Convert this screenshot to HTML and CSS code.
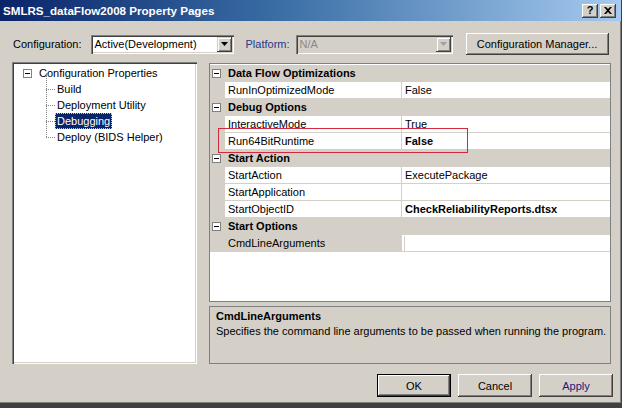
FILE: index.html
```html
<!DOCTYPE html>
<html>
<head>
<meta charset="utf-8">
<title>Property Pages</title>
<link rel="stylesheet" href="styles.css">
</head>
<body>
<div class="window">
  <div class="titlebar">
    <span class="title">SMLRS_dataFlow2008 Property Pages</span>
    <div class="caption-btns">
      <span class="cap cap-help">?</span>
      <span class="cap cap-close"><svg width="8" height="7" viewBox="0 0 8 7"><path d="M0 0h2l2 2 2-2h2L5 3.5 8 7H6L4 5 2 7H0l3-3.5z" fill="#000"/></svg></span>
    </div>
  </div>

  <div class="config-row">
    <span class="lbl">Configuration:</span>
    <div class="combo combo-config">
      <span class="combo-text">Active(Development)</span>
      <span class="drop"><svg width="7" height="4" viewBox="0 0 7 4"><path d="M0 0h7L3.5 4z" fill="#000"/></svg></span>
    </div>
    <span class="lbl lbl-platform">Platform:</span>
    <div class="combo combo-platform">
      <span class="combo-text">N/A</span>
      <span class="drop"><svg width="7" height="4" viewBox="0 0 7 4"><path d="M0 0h7L3.5 4z" fill="#a0a0a0"/></svg></span>
    </div>
    <span class="btn btn-cm">Configuration Manager...</span>
  </div>

  <div class="main">
    <div class="tree">
      <div class="tree-root">
        <span class="minus-box"><span></span></span>
        <span class="tree-label">Configuration Properties</span>
      </div>
      <ul class="tree-children">
        <li><span class="tree-label">Build</span></li>
        <li><span class="tree-label">Deployment Utility</span></li>
        <li><span class="tree-label selected">Debugging</span></li>
        <li class="last"><span class="tree-label">Deploy (BIDS Helper)</span></li>
      </ul>
    </div>

    <div class="right">
      <div class="grid">
        <div class="cat"><span class="minus-box"><span></span></span><span class="cat-name">Data Flow Optimizations</span></div>
        <div class="prop"><span class="gutter"></span><span class="pname">RunInOptimizedMode</span><span class="pval">False</span></div>
        <div class="cat"><span class="minus-box"><span></span></span><span class="cat-name">Debug Options</span></div>
        <div class="prop"><span class="gutter"></span><span class="pname">InteractiveMode</span><span class="pval">True</span></div>
        <div class="prop"><span class="gutter"></span><span class="pname">Run64BitRuntime</span><span class="pval bold">False</span></div>
        <div class="cat"><span class="minus-box"><span></span></span><span class="cat-name">Start Action</span></div>
        <div class="prop"><span class="gutter"></span><span class="pname">StartAction</span><span class="pval">ExecutePackage</span></div>
        <div class="prop"><span class="gutter"></span><span class="pname">StartApplication</span><span class="pval"></span></div>
        <div class="prop"><span class="gutter"></span><span class="pname">StartObjectID</span><span class="pval bold">CheckReliabilityReports.dtsx</span></div>
        <div class="cat"><span class="minus-box"><span></span></span><span class="cat-name">Start Options</span></div>
        <div class="prop prop-selected"><span class="gutter"></span><span class="pname">CmdLineArguments</span><span class="pval pval-edit"><span class="edit"></span></span></div>
        <div class="highlight-box"></div>
      </div>
      <div class="desc">
        <div class="desc-title">CmdLineArguments</div>
        <div class="desc-text">Specifies the command line arguments to be passed when running the program.</div>
      </div>
    </div>
  </div>

  <div class="buttons">
    <span class="btn btn-dlg btn-default">OK</span>
    <span class="btn btn-dlg">Cancel</span>
    <span class="btn btn-dlg btn-apply">Apply</span>
  </div>
</div>
</body>
</html>
```

FILE: styles.css
```css
* { box-sizing: border-box; }
html, body { margin: 0; padding: 0; }
body {
  width: 622px;
  height: 408px;
  background: #404040;
  font-family: "Liberation Sans", Arial, sans-serif;
  font-size: 11px;
  color: #000;
  overflow: hidden;
}
.window {
  width: 622px;
  height: 404px;
  background: #d4d0c8;
  border-right: 1px solid #404040;
  border-bottom: 1px solid #404040;
  box-shadow: inset -1px -1px 0 #808080;
  position: relative;
}
.titlebar {
  height: 21px;
  background: linear-gradient(to right, #0a246a 0%, #3a6ea5 45%, #a6caf0 100%);
  display: flex;
  align-items: center;
  justify-content: space-between;
  padding: 0 3px 0 3px;
}
.title {
  color: #fff;
  font-weight: bold;
  font-size: 11.6px;
  white-space: nowrap;
}
.caption-btns { display: flex; gap: 2px; margin-right: 2px; }
.cap {
  width: 16px;
  height: 14px;
  background: #d4d0c8;
  box-shadow: inset -1px -1px 0 #404040, inset 1px 1px 0 #fff, inset -2px -2px 0 #808080;
  display: flex;
  align-items: center;
  justify-content: center;
  font-weight: bold;
  font-size: 11px;
  line-height: 1;
}

.config-row {
  display: flex;
  align-items: center;
  height: 22px;
  margin-top: 12px;
  padding-left: 13px;
}
.lbl { white-space: nowrap; }
.combo {
  height: 19px;
  display: flex;
  align-items: center;
  background: #fff;
  box-shadow: inset 1px 1px 0 #808080, inset 2px 2px 0 #404040, inset -1px -1px 0 #fff, inset -2px -2px 0 #d4d0c8;
  padding: 2px 2px 2px 4px;
}
.combo-text { flex: 1; white-space: nowrap; }
.drop {
  width: 15px;
  height: 15px;
  background: #d4d0c8;
  box-shadow: inset -1px -1px 0 #404040, inset 1px 1px 0 #d4d0c8, inset 2px 2px 0 #fff, inset -2px -2px 0 #808080;
  display: flex;
  align-items: center;
  justify-content: center;
}
.combo-config { width: 143px; margin-left: 9px; }
.lbl-platform { color: #28378a; margin-left: 12px; }
.combo-platform { width: 157px; margin-left: 6px; background: #d4d0c8; color: #8c8a84; }
.btn {
  display: flex;
  align-items: center;
  justify-content: center;
  background: #d4d0c8;
  box-shadow: inset -1px -1px 0 #404040, inset 1px 1px 0 #fff, inset -2px -2px 0 #808080;
  white-space: nowrap;
}
.btn-cm { width: 143px; height: 22px; margin-left: 13px; }

.main {
  display: flex;
  margin-top: 7px;
  padding-left: 12px;
  height: 302px;
}
.tree {
  width: 185px;
  height: 302px;
  background: #fff;
  box-shadow: inset 1px 1px 0 #808080, inset 2px 2px 0 #404040, inset -1px -1px 0 #fff, inset -2px -2px 0 #d4d0c8;
  padding: 3px 0 0 11px;
}
.tree-root {
  display: flex;
  align-items: center;
  height: 16px;
}
.tree .minus-box { margin-right: 5px; }
.minus-box {
  width: 9px;
  height: 9px;
  border: 1px solid #808080;
  background: #fff;
  display: flex;
  align-items: center;
  justify-content: center;
  flex: none;
}
.minus-box span { width: 5px; height: 1px; background: #000; }
.tree-label {
  padding: 1px 2px;
  line-height: 14px;
  white-space: nowrap;
}
.tree-children {
  list-style: none;
  margin: 0;
  padding: 0 0 0 23px;
}
.tree-children li {
  height: 16px;
  display: flex;
  align-items: center;
  position: relative;
  padding-left: 9px;
}
.tree-children li::before {
  content: "";
  position: absolute;
  left: 0;
  top: 8px;
  width: 9px;
  border-top: 1px dotted #808080;
}
.tree-children li::after {
  content: "";
  position: absolute;
  left: 0;
  top: -8px;
  height: 16px;
  border-left: 1px dotted #808080;
}
.tree-label.selected {
  background: #0a246a;
  color: #fff;
  outline: 1px dotted #c0c0ff;
  outline-offset: -1px;
}

.right {
  display: flex;
  flex-direction: column;
  margin-left: 12px;
  width: 402px;
  padding-top: 1px;
  gap: 4px;
}
.grid {
  height: 239px;
  background: #fff;
  border: 1px solid #808080;
  padding-top: 1px;
  position: relative;
}
.cat, .prop {
  display: flex;
  height: 17px;
  border-bottom: 1px solid #d4d0c8;
}
.cat {
  background: #d4d0c8;
  align-items: center;
  padding-left: 2px;
}
.cat-name {
  font-weight: bold;
  margin-left: 7px;
  white-space: nowrap;
}
.gutter {
  width: 15px;
  background: #d4d0c8;
  flex: none;
}
.pname {
  width: 177px;
  padding-left: 3px;
  line-height: 16px;
  border-right: 1px solid #d4d0c8;
  white-space: nowrap;
  flex: none;
}
.pval {
  flex: 1;
  padding-left: 3px;
  line-height: 16px;
  white-space: nowrap;
}
.bold { font-weight: bold; }
.prop-selected .pname { background: #d4d0c8; }
.pval-edit { padding: 1px 0 0 2px; background: #fff; }
.edit { display: block; height: 15px; border-left: 1px solid #d4d0c8; }
.highlight-box {
  position: absolute;
  left: 8px;
  top: 64px;
  width: 250px;
  height: 25px;
  border: 1px solid #d0283c;
}

.desc {
  height: 58px;
  border: 1px solid #808080;
  padding: 2px 6px;
}
.desc-title { font-weight: bold; line-height: 14px; }
.desc-text { line-height: 16px; white-space: nowrap; }

.buttons {
  display: flex;
  justify-content: flex-end;
  gap: 7px;
  margin-top: 10px;
  padding-right: 8px;
}
.btn-dlg { width: 74px; height: 23px; }
.btn-default {
  box-shadow: inset 0 0 0 1px #000, inset -2px -2px 0 #404040, inset 2px 2px 0 #fff, inset -3px -3px 0 #808080;
}
.btn-apply { color: #1a1a7a; }
```
